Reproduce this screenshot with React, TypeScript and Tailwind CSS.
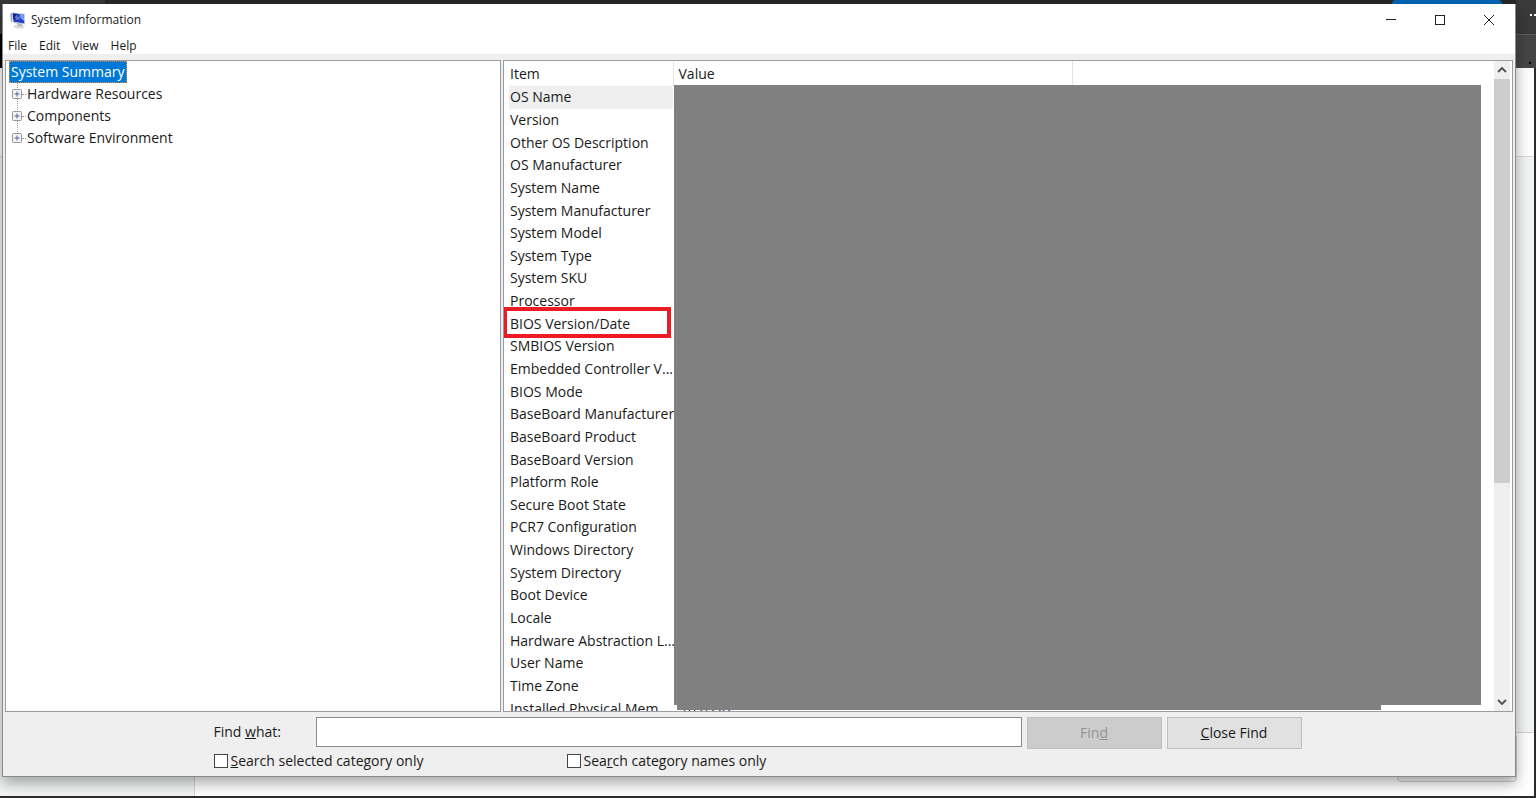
import React from "react";

const ITEMS = [
  "OS Name", "Version", "Other OS Description", "OS Manufacturer", "System Name",
  "System Manufacturer", "System Model", "System Type", "System SKU", "Processor",
  "BIOS Version/Date", "SMBIOS Version", "Embedded Controller V...", "BIOS Mode",
  "BaseBoard Manufacturer", "BaseBoard Product", "BaseBoard Version", "Platform Role",
  "Secure Boot State", "PCR7 Configuration", "Windows Directory", "System Directory",
  "Boot Device", "Locale", "Hardware Abstraction L...", "User Name", "Time Zone",
  "Installed Physical Mem...",
];

const BRANCHES = ["Hardware Resources", "Components", "Software Environment"];

function AppIcon() {
  return (
    <svg width="16" height="17" viewBox="0 0 16 17" aria-hidden="true">
      <ellipse cx="9" cy="14.4" rx="5" ry="2" fill="#d8dadb" />
      <path d="M7.5 11l4.5.5v2.8l-4.5-.6z" fill="#b5b9bc" />
      <path d="M.2 2l2.2-1.4v9.8L.9 9.6z" fill="#a4acbc" />
      <path d="M2 .6l12.6 1.2.6 10.8-12-1.6z" fill="#c3cad8" />
      <path d="M2.8 1.4l10.8 1 .6 8.8L3.8 9.8z" fill="#2440c0" />
      <path d="M2.8 1.4l4.4.4 1 3.6-5 2z" fill="#14248c" />
      <path d="M9.4 2.1l4.2.4.5 6.6-3-2.4z" fill="#7f9ff2" />
      <path d="M5 6l1.8-2.6v4L9 4.6v3" fill="none" stroke="#8fabff" strokeWidth=".8" />
    </svg>
  );
}

function Plus() {
  return (
    <svg width="10" height="10" viewBox="0 0 10 10" aria-hidden="true">
      <rect x=".5" y=".5" width="9" height="9" rx="1" fill="#f4f4f4" stroke="#969696" />
      <path d="M2.5 5h5M5 2.5v5" stroke="#4b63a7" />
    </svg>
  );
}

function Backdrop() {
  return (
    <div aria-hidden="true" className="absolute inset-0 flex flex-col bg-[#2b2b2b]">
      <div className="flex h-[34px] bg-[#272727]">
        <div className="w-[105px] bg-[#383838]" />
        <div className="flex-1" />
        <div className="mr-[14px] h-1 w-[110px] rounded-t-full bg-[#0067b8]" />
        <div className="flex w-5 items-start justify-end gap-0.5 overflow-hidden bg-[#3a3a3a] pt-[14px]">
          <span className="size-0.5 bg-white" />
          <span className="size-0.5 bg-white" />
        </div>
      </div>
      <div className="flex h-[34px] justify-end bg-black">
        <div className="flex w-5 items-end justify-end border-t border-[#5c5c5c] bg-[#454545] pb-1 pr-[5px]">
          <span className="size-0.5 bg-black" />
        </div>
      </div>
      <div className="mr-0.5 flex flex-1 flex-col border-b-2 border-[#2b2b2b] bg-[#f3f5f5]">
        <div className="h-[89px] border-b border-[#d8d8d8] bg-white" />
        <div className="flex-1" />
        <div className="flex h-16">
          <div className="w-[194px]" />
          <div className="flex flex-1 items-start justify-end border-l border-t border-[#d2d2d2] bg-white pr-[17px]">
            <div className="h-[49px] w-[120px] rounded border border-[#cfcfcf] bg-[#f3f3f3]" />
          </div>
        </div>
      </div>
    </div>
  );
}

export default function App() {
  return (
    <div
      className="relative flex min-h-screen flex-col pb-[21px] pl-0.5 pr-5 pt-1 text-[#1a1a1a]"
      style={{ fontFamily: '"Open Sans", "Noto Sans", sans-serif' }}
    >
      <Backdrop />
      <main className="relative flex flex-1 flex-col border-b border-l border-r border-[#8a8a8a] bg-[#efefef] shadow-[0_6px_14px_rgba(0,0,0,0.35)]">
        <header className="flex h-8 items-center bg-white pl-[7px] pr-0.5">
          <AppIcon />
          <h1 className="ml-[5px] flex-1 text-xs">System Information</h1>
          <div className="flex text-[#222]">
            <button aria-label="Minimize" className="flex w-[49px] justify-center">
              <svg width="12" height="12" viewBox="0 0 12 12"><path d="M1 5.5h10" stroke="currentColor" /></svg>
            </button>
            <button aria-label="Maximize" className="flex w-[49px] justify-center">
              <svg width="12" height="12" viewBox="0 0 12 12"><rect x="1.5" y="1.5" width="9" height="9" fill="none" stroke="currentColor" /></svg>
            </button>
            <button aria-label="Close" className="flex w-[49px] justify-center">
              <svg width="12" height="12" viewBox="0 0 12 12"><path d="M1 1l10 10M11 1L1 11" stroke="currentColor" /></svg>
            </button>
          </div>
        </header>
        <nav className="flex h-[18px] items-center gap-3 bg-white pl-[5px] pt-0.5 text-xs">
          <button>File</button>
          <button>Edit</button>
          <button>View</button>
          <button>Help</button>
        </nav>

        <div className="mt-[6px] flex flex-1 gap-0.5 px-0.5">
          <section className="w-[496px] shrink-0 border border-[#9a9ca5] bg-white pl-[3px] text-sm">
            <button className="flex h-[22px] items-center whitespace-nowrap border border-dotted border-[#e08a3c] bg-[#0078d7] px-px text-white">
              System Summary
            </button>
            <ul className="relative">
              <li aria-hidden="true" className="absolute bottom-[11px] left-2 top-0 border-l border-dotted border-[#9a9a9a]" />
              {BRANCHES.map((name) => (
                <li key={name} className="relative flex h-[22px] items-center pl-[3px]">
                  <button aria-label={"Expand " + name}><Plus /></button>
                  <span className="mr-px w-1 border-t border-dotted border-[#9a9a9a]" />
                  <span>{name}</span>
                </li>
              ))}
            </ul>
          </section>

          <section className="flex min-w-0 flex-1 border border-[#9a9ca5] bg-white">
            <div className="relative h-[650px] min-w-0 flex-1 overflow-hidden">
              <table className="h-[659px] w-full table-fixed border-collapse text-left text-sm">
                <colgroup>
                  <col className="w-[5px]" />
                  <col className="w-[164px]" />
                  <col className="w-[399px]" />
                  <col />
                </colgroup>
                <thead>
                  <tr className="h-[25px]">
                    <th className="p-0" />
                    <th className="border-r border-[#e5e5e5] p-0 pl-px font-normal">Item</th>
                    <th className="border-r border-[#e5e5e5] p-0 pl-[5px] font-normal">Value</th>
                    <th className="p-0" />
                  </tr>
                </thead>
                <tbody>
                  {ITEMS.map((name, i) => (
                    <tr key={name}>
                      <td className="p-0" />
                      <td className={i === 0 ? "whitespace-nowrap bg-[#efefef] p-0 pl-px" : "whitespace-nowrap p-0 pl-px"}>{name}</td>
                      <td className="p-0 pl-[7px]">{i === ITEMS.length - 1 ? "16.0 GB" : ""}</td>
                      <td className="p-0" />
                    </tr>
                  ))}
                </tbody>
              </table>
              <div className="absolute bottom-[6px] left-[170px] right-[13px] top-6 bg-[#808080]" />
              <div className="absolute bottom-px left-[173px] right-[113px] h-[5px] bg-[#808080]" />
              <div className="absolute left-[-1px] top-[246px] h-[31px] w-[168px] border-4 border-[#ed1c24]" />
            </div>
            <div className="mr-0.5 flex w-4 flex-col bg-[#efefef]">
              <button aria-label="Scroll up" className="flex h-[18px] items-center justify-center">
                <svg width="10" height="8" viewBox="0 0 10 8"><path d="M1 6l4-4 4 4" fill="none" stroke="#505050" strokeWidth="1.8" /></svg>
              </button>
              <div className="h-[404px] bg-[#cdcdcd]" />
              <div className="flex-1" />
              <button aria-label="Scroll down" className="flex h-[18px] items-center justify-center">
                <svg width="10" height="8" viewBox="0 0 10 8"><path d="M1 2l4 4 4-4" fill="none" stroke="#505050" strokeWidth="1.8" /></svg>
              </button>
            </div>
          </section>
        </div>

        <form className="mx-auto h-16 w-[1091px] pr-[3px] pt-[5px] text-sm" onSubmit={(e) => e.preventDefault()}>
          <div className="flex">
            <label htmlFor="find" className="w-[102px] pt-[5px]">Find <u>w</u>hat:</label>
            <input id="find" type="text" className="h-[30px] min-w-0 flex-1 border border-[#8a8a8a] bg-white px-2 outline-none" />
            <button type="submit" disabled className="ml-[5px] h-8 w-[135px] border border-[#bfbfbf] bg-[#cccccc] text-[#939393]">Fin<u>d</u></button>
            <button type="button" className="ml-[5px] h-8 w-[135px] border border-[#bfbfbf] bg-[#e1e1e1]"><u>C</u>lose Find</button>
          </div>
          <div className="mt-0.5 flex">
            <label className="flex w-[353px] items-center gap-[3px]">
              <input type="checkbox" className="size-[14px] appearance-none border border-[#444] bg-white" />
              <span><u>S</u>earch selected category only</span>
            </label>
            <label className="flex items-center gap-[3px]">
              <input type="checkbox" className="size-[14px] appearance-none border border-[#444] bg-white" />
              <span>Sea<u>r</u>ch category names only</span>
            </label>
          </div>
        </form>
      </main>
    </div>
  );
}
